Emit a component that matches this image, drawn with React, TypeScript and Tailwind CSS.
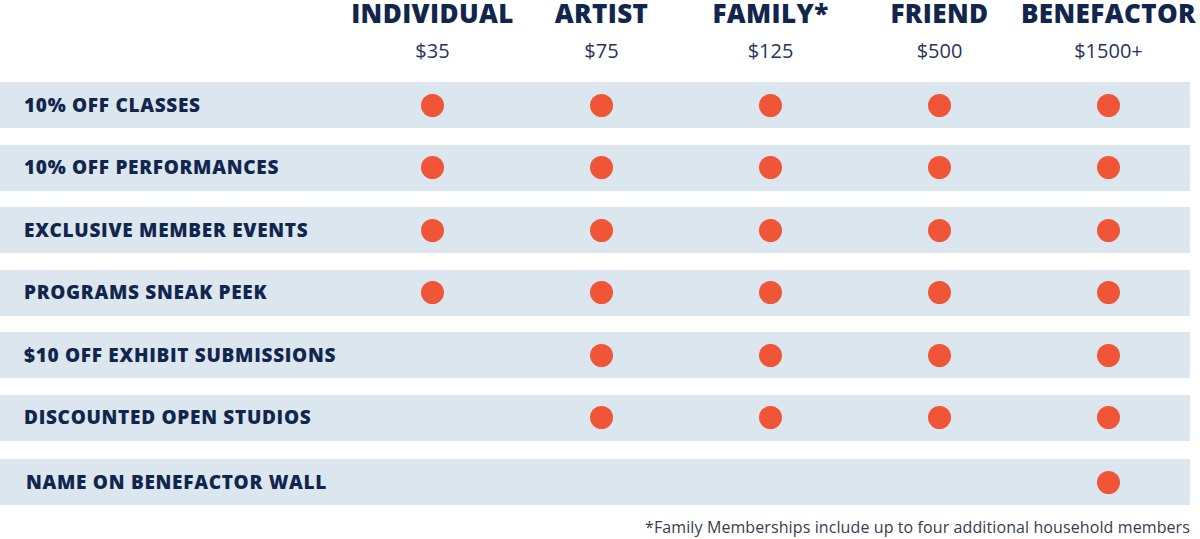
const tiers = [
  { name: "INDIVIDUAL", price: "$35" },
  { name: "ARTIST", price: "$75" },
  { name: "FAMILY*", price: "$125" },
  { name: "FRIEND", price: "$500" },
  { name: "BENEFACTOR", price: "$1500+" },
];

// which tiers get each benefit (index into tiers)
const benefits = [
  { label: "10% OFF CLASSES", from: 0 },
  { label: "10% OFF PERFORMANCES", from: 0 },
  { label: "EXCLUSIVE MEMBER EVENTS", from: 0 },
  { label: "PROGRAMS SNEAK PEEK", from: 0 },
  { label: "$10 OFF EXHIBIT SUBMISSIONS", from: 1 },
  { label: "DISCOUNTED OPEN STUDIOS", from: 1 },
  { label: "NAME ON BENEFACTOR WALL", from: 4 },
];

const Dot = () => <span className="block w-[23px] h-[23px] rounded-full bg-[#f05537]" />;

export default function App() {
  return (
    <div className="w-[1200px] h-[539px] bg-white overflow-hidden font-['Open_Sans',sans-serif] text-[#12264d]">
      {/* tier headers */}
      <div className="flex pl-[348px]">
        {tiers.map((t) => (
          <div key={t.name} className="w-[169px] shrink-0 flex flex-col items-center">
            <span className="text-[26px] leading-[27px] font-extrabold tracking-[0.4px] whitespace-nowrap">{t.name}</span>
            <span className="mt-[10px] text-[20px] leading-[27px] text-[#27355a]">{t.price}</span>
          </div>
        ))}
      </div>

      {/* benefit rows */}
      <div className="mt-[18px] flex flex-col gap-[16.5px]">
        {benefits.map((b, i) => (
          <div
            key={b.label}
            className={`w-[1190px] h-[46px] bg-[#dbe6ef] flex items-center ${i === 6 ? "mt-[2px]" : ""}`}
          >
            <div className={`w-[348px] shrink-0 text-[19px] font-extrabold tracking-[0.7px] whitespace-nowrap ${i === 6 ? "pl-[26px]" : "pl-[24px]"}`}>
              {b.label}
            </div>
            {tiers.map((t, j) => (
              <div key={t.name} className="w-[169px] shrink-0 flex justify-center">
                {j >= b.from && <Dot />}
              </div>
            ))}
          </div>
        ))}
      </div>

      <p className="mt-[12px] w-[1190px] text-right text-[16px] leading-[20px] tracking-[0.1px] text-[#373d4c]">
        *Family Memberships include up to four additional household members
      </p>
    </div>
  );
}
